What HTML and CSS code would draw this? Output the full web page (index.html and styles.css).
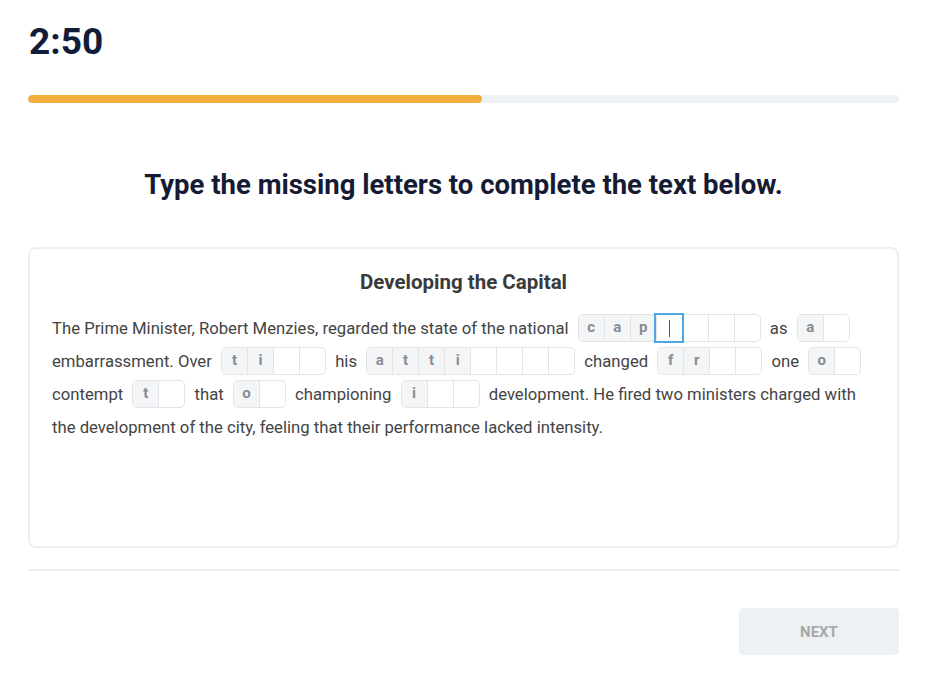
FILE: index.html
```
<!DOCTYPE html>
<html lang="en">

<head>
    <meta charset="UTF-8">
    <title>Fill in the missing letters</title>
    <link rel="stylesheet" href="styles.css">
</head>

<body>
    <div class="page">
        <div class="timer">2:50</div>
        <div class="progress">
            <div class="progress-fill" style="width: 52.1%;"></div>
        </div>

        <h1 class="prompt">Type the missing letters to complete the text below.</h1>

        <div class="card">
            <h2 class="card-title">Developing the Capital</h2>
            <p class="passage">
                The Prime Minister, Robert Menzies, regarded the state of the national
                <span class="word"><span class="cell given">c</span><span class="cell given">a</span><span class="cell given">p</span><span class="cell active"><span class="caret"></span></span><span class="cell"></span><span class="cell"></span><span class="cell"></span></span>
                as
                <span class="word"><span class="cell given">a</span><span class="cell"></span></span>
                embarrassment. Over
                <span class="word"><span class="cell given">t</span><span class="cell given">i</span><span class="cell"></span><span class="cell"></span></span>
                his
                <span class="word"><span class="cell given">a</span><span class="cell given">t</span><span class="cell given">t</span><span class="cell given">i</span><span class="cell"></span><span class="cell"></span><span class="cell"></span><span class="cell"></span></span>
                changed
                <span class="word"><span class="cell given">f</span><span class="cell given">r</span><span class="cell"></span><span class="cell"></span></span>
                one
                <span class="word"><span class="cell given">o</span><span class="cell"></span></span>
                contempt
                <span class="word"><span class="cell given">t</span><span class="cell"></span></span>
                that
                <span class="word"><span class="cell given">o</span><span class="cell"></span></span>
                championing
                <span class="word"><span class="cell given">i</span><span class="cell"></span><span class="cell"></span></span>
                development. He fired two ministers charged with the development of the city, feeling that
                their performance lacked intensity.
            </p>
        </div>

        <div class="divider"></div>

        <div class="actions">
            <button class="next" disabled>NEXT</button>
        </div>
    </div>
</body>

</html>
```

FILE: styles.css
```
html,
body {
    margin: 0;
    background-color: #fff;
    font-family: Roboto, "Noto Sans", sans-serif;
}

.page {
    width: 871px;
    margin-left: 28px;
    padding-top: 20px;
}

.timer {
    font-size: 37px;
    font-weight: 700;
    color: #101c3a;
    line-height: 44px;
    padding-left: 1px;
}

.progress {
    margin-top: 31px;
    height: 8px;
    background-color: #eef1f5;
    border-radius: 4px;
    overflow: hidden;
}

.progress-fill {
    height: 100%;
    background-color: #f2ae3d;
    border-radius: 4px;
}

.prompt {
    margin: 66px 0 0 0;
    text-align: center;
    font-size: 27.5px;
    font-weight: 700;
    color: #141b33;
    line-height: 32px;
}

.card {
    margin-top: 46px;
    height: 297px;
    border: 2px solid #eceef1;
    border-radius: 8px;
    padding: 0 22px;
}

.card-title {
    margin: 21px 0 0 0;
    text-align: center;
    font-size: 20.5px;
    font-weight: 700;
    color: #3a3a3a;
    line-height: 24px;
}

.passage {
    margin: 18px 0 0 0;
    font-size: 16.7px;
    line-height: 33px;
    color: #444;
}

.word {
    display: inline-flex;
    vertical-align: middle;
    margin: -4px 5px 0 5px;
    border: 1px solid #e2e4e8;
    border-radius: 5px;
}

.cell {
    position: relative;
    width: 25px;
    height: 26px;
    display: flex;
    justify-content: center;
    align-items: center;
    border-left: 1px solid #e2e4e8;
    font-size: 15px;
    font-weight: 700;
    color: #868c95;
    line-height: 1;
}

.cell:first-child {
    border-left: none;
    border-radius: 4px 0 0 4px;
}

.cell:last-child {
    border-radius: 0 4px 4px 0;
}

.cell.given {
    background-color: #f4f5f7;
}

.cell.active {
    outline: 2px solid #4fa6e6;
    z-index: 1;
}

.caret {
    position: absolute;
    left: 12px;
    top: 5px;
    width: 1px;
    height: 17px;
    background-color: #555;
}

.divider {
    margin-top: 21px;
    height: 2px;
    background-color: #eef0f3;
}

.actions {
    display: flex;
    justify-content: flex-end;
    margin-top: 37px;
}

.next {
    width: 160px;
    height: 47px;
    border: none;
    border-radius: 4px;
    background-color: #eef1f4;
    color: #a8a8a8;
    font-family: Roboto, "Noto Sans", sans-serif;
    font-size: 15px;
    font-weight: 700;
}
```
